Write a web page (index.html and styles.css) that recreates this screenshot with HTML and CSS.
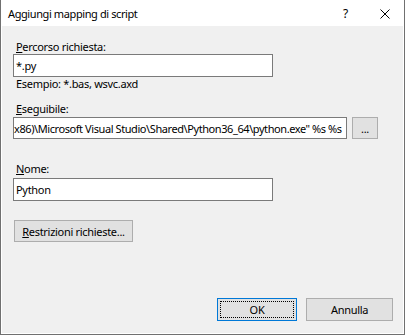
FILE: index.html
```html
<!DOCTYPE html>
<html lang="it">
<head>
<meta charset="utf-8">
<title>Aggiungi mapping di script</title>
<link rel="stylesheet" href="styles.css">
</head>
<body>
<div class="window">
  <div class="titlebar">
    <span class="title">Aggiungi mapping di script</span>
    <span class="help">?</span>
    <span class="close">
      <svg width="10" height="10" viewBox="0 0 10 10"><path d="M0.5 0.5 L9.5 9.5 M9.5 0.5 L0.5 9.5" stroke="#000" stroke-width="1" fill="none"/></svg>
    </span>
  </div>
  <div class="content">
    <div class="label first"><u>P</u>ercorso richiesta:</div>
    <div class="textbox short"><span class="val">*.py</span></div>
    <div class="label hint">Esempio: *.bas, wsvc.axd</div>
    <div class="label exe"><u>E</u>seguibile:</div>
    <div class="row">
      <div class="textbox long"><span class="val">x86)\Microsoft Visual Studio\Shared\Python36_64\python.exe" %s %s</span></div>
      <div class="btn browse">...</div>
    </div>
    <div class="label name"><u>N</u>ome:</div>
    <div class="textbox short name-box"><span class="val">Python</span></div>
    <div class="btn restr"><span><u>R</u>estrizioni richieste...</span></div>
    <div class="actions">
      <div class="btn ok"><span class="focus">OK</span></div>
      <div class="btn cancel">Annulla</div>
    </div>
  </div>
</div>
</body>
</html>
```

FILE: styles.css
```css
html, body {
  margin: 0;
  padding: 0;
  background: #ffffff;
}
body {
  font-family: "Noto Sans", "Open Sans", sans-serif;
  font-size: 11px;
  letter-spacing: -0.3px;
  color: #000;
}
.window {
  width: 405px;
  height: 335px;
  box-sizing: border-box;
  border: 1px solid #707070;
  border-top: none;
  padding: 0 1px 1px 1px;
  background: #ffffff;
  display: flex;
  flex-direction: column;
}
.titlebar {
  height: 26px;
  display: flex;
  align-items: center;
  background: #ffffff;
  padding-left: 6px;
}
.title {
  flex: 1;
  font-size: 11px;
  letter-spacing: -0.4px;
}
.help {
  width: 12px;
  margin-right: 25px;
  font-size: 12px;
}
.close {
  width: 10px;
  height: 10px;
  margin-right: 13px;
  margin-top: 1px;
  display: flex;
}
.content {
  flex: 1;
  background: #f0f0f0;
  padding-left: 11px;
  padding-right: 10px;
  display: flex;
  flex-direction: column;
  align-items: flex-start;
}
.label {
  line-height: 13px;
  height: 13px;
  padding-left: 3px;
  white-space: nowrap;
}
.label u {
  text-decoration-thickness: 1px;
  text-underline-offset: 1px;
}
.first { margin-top: 14px; margin-bottom: 1px; }
.hint { margin-top: 0; }
.exe { margin-top: 12px; margin-bottom: 2px; }
.name { margin-top: 23px; margin-bottom: 3px; }
.textbox {
  box-sizing: border-box;
  background: #ffffff;
  border: 1px solid #7a7a7a;
  height: 23px;
  display: flex;
  align-items: center;
  overflow: hidden;
  white-space: nowrap;
}
.textbox .val {
  padding-left: 2px;
}
.short { width: 260px; }
.row {
  display: flex;
  gap: 5px;
}
.long {
  width: 334px;
  height: 22px;
}
.long .val {
  padding-left: 0;
  letter-spacing: -0.42px;
}
.btn {
  box-sizing: border-box;
  background: #e1e1e1;
  border: 1px solid #adadad;
  display: flex;
  align-items: center;
  justify-content: center;
  white-space: nowrap;
}
.browse {
  width: 26px;
  height: 22px;
}
.restr {
  margin-top: 19px;
  margin-left: 1px;
  width: 119px;
  height: 22px;
}
.restr u {
  text-underline-offset: 1px;
}
.actions {
  align-self: stretch;
  margin-top: 56px;
  display: flex;
  justify-content: flex-end;
  gap: 9px;
}
.ok {
  width: 80px;
  height: 23px;
  border-color: #0078d7;
  padding: 2px;
}
.ok .focus {
  box-sizing: border-box;
  width: 100%;
  height: 100%;
  border: 1px dotted #000;
  display: flex;
  align-items: center;
  justify-content: center;
}
.cancel {
  width: 87px;
  height: 23px;
}
```
